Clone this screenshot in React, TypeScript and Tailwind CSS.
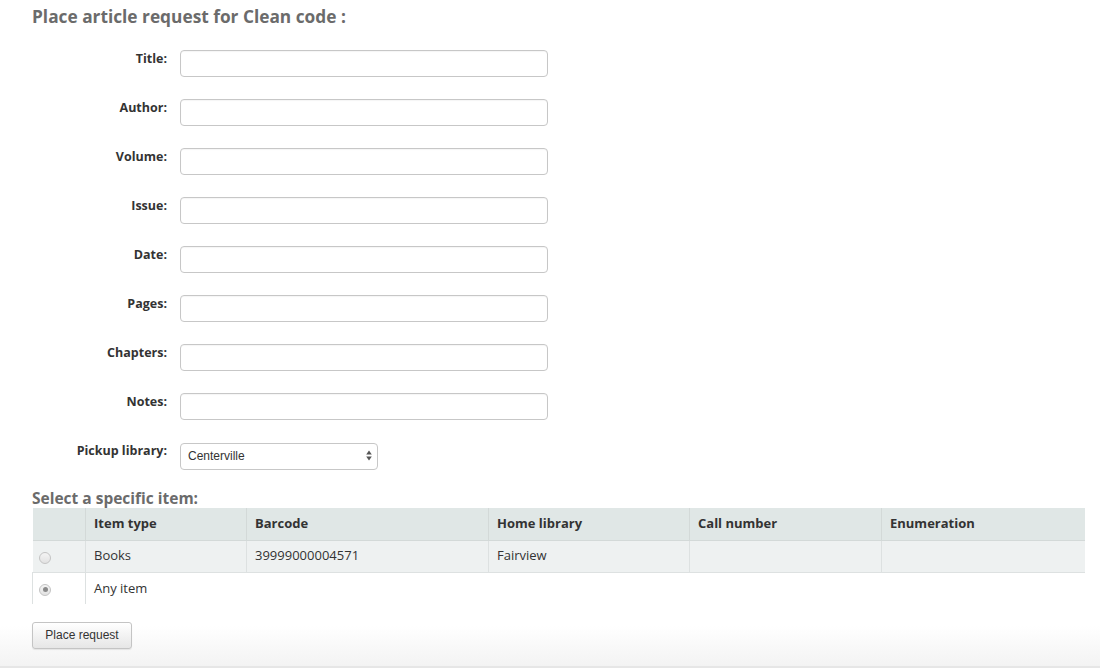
import React from "react";

const fields = ["Title", "Author", "Volume", "Issue", "Date", "Pages", "Chapters", "Notes"];

function Radio({ checked }: { checked?: boolean }) {
  return (
    <span className="inline-flex h-[12px] w-[12px] items-center justify-center rounded-full border border-[#c4c4c4] bg-gradient-to-b from-[#f4f4f4] to-[#e2e2e2]">
      {checked && <span className="h-[5px] w-[5px] rounded-full bg-[#8a8a8a]" />}
    </span>
  );
}

export default function App() {
  const os = { fontFamily: '"Open Sans", "Liberation Sans", sans-serif' };
  return (
    <div
      className="flex h-[668px] w-[1100px] flex-col border-b-2 border-[#e6e6e6] bg-linear-to-b from-white from-[94%] to-[#f3f3f3] pl-[32px] text-[#333]"
      style={os}
    >
      <h1 className="mt-[5px] text-[17.3px] leading-[24px] font-bold text-[#6b6b6b]">
        Place article request for Clean code :
      </h1>

      <div className="mt-[21px] flex flex-col gap-[22px]">
        {fields.map((f) => (
          <div key={f} className="flex items-start">
            <label className="w-[135px] pt-[1px] text-right text-[12.5px] leading-[16px] font-bold text-[#333]">
              {f}:
            </label>
            <input
              type="text"
              className="ml-[13px] h-[27px] w-[368px] rounded-[4px] border border-[#c7c7c7] bg-white shadow-[inset_0_1px_1px_rgba(0,0,0,0.04)] outline-none"
            />
          </div>
        ))}
        <div className="flex items-start">
          <label className="w-[135px] pt-[1px] text-right text-[12.5px] leading-[16px] font-bold text-[#333]">
            Pickup library:
          </label>
          <div className="relative ml-[13px] h-[27px] w-[198px]">
            <select
              className="h-full w-full appearance-none rounded-[4px] border border-[#c7c7c7] bg-white pl-[7px] text-[12px] text-[#333] outline-none"
              style={{ fontFamily: '"Liberation Sans", Arial, sans-serif' }}
              defaultValue="Centerville"
            >
              <option>Centerville</option>
            </select>
            <svg
              className="pointer-events-none absolute top-[8px] right-[6px]"
              width="6"
              height="11"
              viewBox="0 0 6 11"
            >
              <path d="M3 0.5 L5.8 4.5 H0.2 Z" fill="#555" />
              <path d="M3 10.5 L5.8 6.5 H0.2 Z" fill="#555" />
            </svg>
          </div>
        </div>
      </div>

      <h2 className="mt-[19px] text-[15.5px] leading-[20px] font-bold text-[#6b6b6b]">
        Select a specific item:
      </h2>

      <table className="w-[1052px] table-fixed border-collapse text-[13px]">
        <colgroup>
          <col className="w-[53px]" />
          <col className="w-[161px]" />
          <col className="w-[242px]" />
          <col className="w-[201px]" />
          <col className="w-[192px]" />
          <col className="w-[203px]" />
        </colgroup>
        <thead>
          <tr className="h-[32px] bg-[#e0e7e6] text-left">
            <th className="border-r border-b border-[#d3d9d8]"></th>
            <th className="border-r border-b border-[#d3d9d8] px-[8px] font-bold text-[#333]">Item type</th>
            <th className="border-r border-b border-[#d3d9d8] px-[8px] font-bold text-[#333]">Barcode</th>
            <th className="border-r border-b border-[#d3d9d8] px-[8px] font-bold text-[#333]">Home library</th>
            <th className="border-r border-b border-[#d3d9d8] px-[8px] font-bold text-[#333]">Call number</th>
            <th className="border-b border-[#d3d9d8] px-[8px] font-bold text-[#333]">Enumeration</th>
          </tr>
        </thead>
        <tbody>
          <tr className="h-[32px] bg-[#eef1f1]">
            <td className="border-r border-b border-[#dde1e1] pl-[6px] align-middle">
              <span className="mt-[3px] flex">
                <Radio />
              </span>
            </td>
            <td className="border-r border-b border-[#dde1e1] px-[8px]">Books</td>
            <td className="border-r border-b border-[#dde1e1] px-[8px]">39999000004571</td>
            <td className="border-r border-b border-[#dde1e1] px-[8px]">Fairview</td>
            <td className="border-r border-b border-[#dde1e1] px-[8px]"></td>
            <td className="border-b border-[#dde1e1] px-[8px]"></td>
          </tr>
          <tr className="h-[32px]">
            <td className="border-r border-l border-[#dde1e1] pl-[6px] align-middle">
              <span className="mt-[3px] flex">
                <Radio checked />
              </span>
            </td>
            <td className="px-[8px]">Any item</td>
            <td></td>
            <td></td>
            <td></td>
            <td></td>
          </tr>
        </tbody>
      </table>

      <div className="mt-[17px]">
        <button
          className="h-[27px] w-[100px] rounded-[3px] border border-[#c4c4c4] bg-gradient-to-b from-white to-[#e6e6e6] text-[12px] text-[#333] shadow-[0_1px_1px_rgba(0,0,0,0.08)]"
          style={{ fontFamily: '"Liberation Sans", Arial, sans-serif' }}
        >
          Place request
        </button>
      </div>
    </div>
  );
}
